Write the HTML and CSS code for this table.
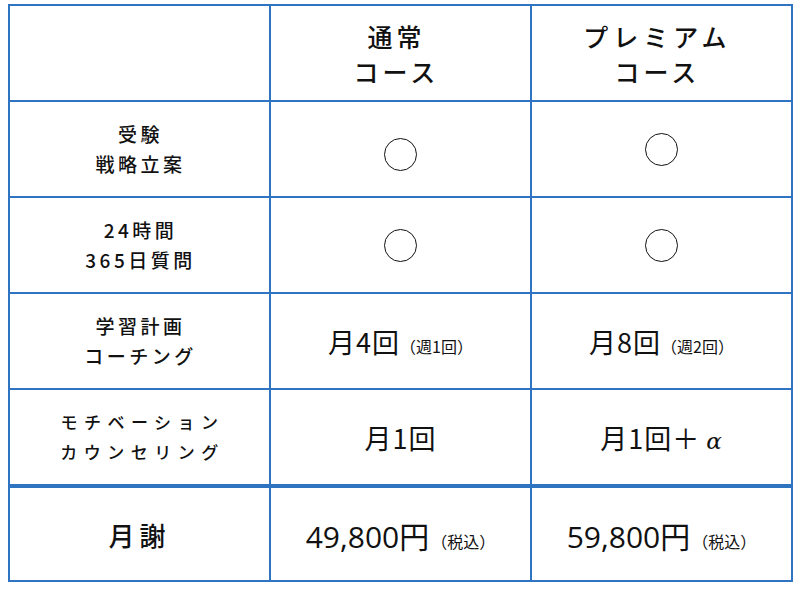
FILE: index.html
```html
<!DOCTYPE html>
<html lang="ja">
<head>
<meta charset="utf-8">
<link rel="stylesheet" href="styles.css">
</head>
<body>
<div class="table">
  <div class="cell"></div>
  <div class="cell head"><span>通常</span><span>コース</span></div>
  <div class="cell head wide"><span>プレミアム</span><span>コース</span></div>

  <div class="cell label"><span>受験</span><span>戦略立案</span></div>
  <div class="cell"><span class="circle low"></span></div>
  <div class="cell"><span class="circle"></span></div>

  <div class="cell label"><span>24時間</span><span>365日質問</span></div>
  <div class="cell"><span class="circle"></span></div>
  <div class="cell"><span class="circle"></span></div>

  <div class="cell label"><span>学習計画</span><span>コーチング</span></div>
  <div class="cell"><span class="value"><span class="big">月4回</span><span class="small">（週1回）</span></span></div>
  <div class="cell"><span class="value"><span class="big">月8回</span><span class="small">（週2回）</span></span></div>

  <div class="cell label spaced"><span>モチベーション</span><span>カウンセリング</span></div>
  <div class="cell"><span class="value"><span class="big">月1回</span></span></div>
  <div class="cell"><span class="value"><span class="big">月1回＋<i class="alpha">α</i></span></span></div>

  <div class="cell label last fee">月謝</div>
  <div class="cell last"><span class="value"><span class="price">49,800円</span><span class="small">（税込）</span></span></div>
  <div class="cell last"><span class="value"><span class="price">59,800円</span><span class="small">（税込）</span></span></div>
</div>
</body>
</html>
```
FILE: styles.css
```css
html, body {
  margin: 0;
  padding: 0;
  background: #ffffff;
}
body {
  padding: 4px 8px 0 8px;
  font-family: "Noto Sans CJK JP", "Noto Sans", sans-serif;
  color: #111111;
}
.table {
  display: grid;
  grid-template-columns: 261px 261px 261px;
  grid-template-rows: repeat(5, 96px) 96px;
  border-left: 2px solid #2f74c0;
  border-top: 2px solid #2f74c0;
  width: max-content;
}
.cell {
  border-right: 2px solid #2f74c0;
  border-bottom: 2px solid #2f74c0;
  display: flex;
  flex-direction: column;
  align-items: center;
  justify-content: center;
  text-align: center;
  font-weight: 500;
}
.cell.last {
  border-top: 2px solid #2f74c0;
}
.head {
  font-size: 25px;
  line-height: 35px;
  letter-spacing: 4px;
  padding-top: 2px;
  padding-right: 8px;
}
.head.wide span:first-child {
  letter-spacing: 5px;
}
.label {
  font-size: 19px;
  line-height: 30px;
  letter-spacing: 3.5px;
  padding-left: 2px;
}
.label.spaced {
  font-size: 17px;
  letter-spacing: 6.5px;
  padding-left: 6px;
}
.label.fee {
  font-size: 26px;
  letter-spacing: 5px;
  padding-left: 0;
  padding-top: 2px;
}
.circle {
  display: block;
  width: 31px;
  height: 31px;
  border: 1.6px solid #111111;
  border-radius: 50%;
}
.circle.low {
  margin-top: 10px;
}
.value {
  display: flex;
  flex-direction: row;
  align-items: baseline;
}
.big {
  font-size: 27px;
  font-weight: 400;
  letter-spacing: 1px;
}
.alpha {
  font-family: "DejaVu Serif", serif;
  font-size: 23px;
  margin-left: 6px;
}
.small {
  font-size: 16px;
  font-weight: 400;
  margin-left: 0;
}
.price {
  font-family: "Open Sans", "Noto Sans CJK JP", sans-serif;
  font-size: 30px;
  font-weight: 400;
  margin-right: 2px;
}
.last .value {
  padding-top: 2px;
}
```
